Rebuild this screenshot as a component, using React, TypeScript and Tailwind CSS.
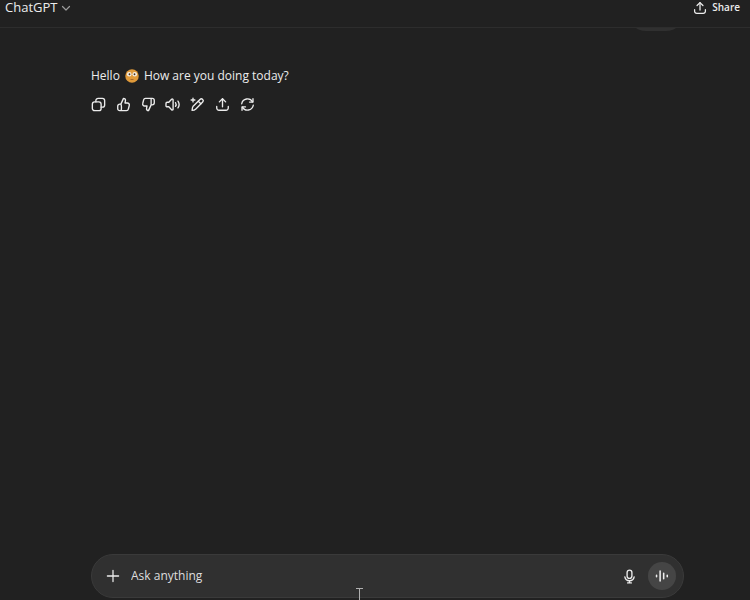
import React from "react"

interface IconProps {
    className?: string;
    children: React.ReactNode;
}

function Icon({ className = "size-[15px]", children }: IconProps) {
    return (
        <svg viewBox="0 0 20 20" fill="none" stroke="currentColor" strokeWidth="1.8" strokeLinecap="round" strokeLinejoin="round" className={className} aria-hidden="true">
            {children}
        </svg>
    )
}

const SharePaths = () => (
    <>
        <path d="M10 13V2.500" />
        <path d="M5.800 6.500L10 2.300l4.200 4.200" />
        <path d="M2.300 12.500v2.200a3 3 0 0 0 3 3h9.400a3 3 0 0 0 3-3v-2.200" />
    </>
)

const actions = [
    {
        label: "Copy",
        icon: (
            <>
                <rect x="1.800" y="6.500" width="11.700" height="11.700" rx="3" />
                <path d="M6.500 6.500V4.800a3 3 0 0 1 3-3h5.700a3 3 0 0 1 3 3v5.700a3 3 0 0 1-3 3h-1.700" />
            </>
        )
    },
    {
        label: "Good response",
        icon: <path d="M6.500 9.500L10 1.800c1.800 0 2.900 1.400 2.600 3.100L12 8h3.200a2.600 2.600 0 0 1 2.500 3.300l-1.200 4.700a2.700 2.700 0 0 1-2.600 2.200H5a2.700 2.700 0 0 1-2.700-2.700v-3.300A2.700 2.700 0 0 1 5 9.500h1.500c1 1.500 1 6.500.3 8.500" />
    },
    {
        label: "Bad response",
        icon: <path d="M13.500 10.500L10 18.200c-1.800 0-2.900-1.400-2.600-3.100L8 12H4.800a2.600 2.600 0 0 1-2.500-3.300L3.500 4a2.700 2.700 0 0 1 2.600-2.200H15a2.700 2.700 0 0 1 2.700 2.700v3.300a2.700 2.700 0 0 1-2.700 2.700h-1.500V2" />
    },
    {
        label: "Read aloud",
        icon: (
            <>
                <path d="M1.300 8.500A1.500 1.500 0 0 1 2.800 7h2.300l3.700-4c.8-.8 2-.3 2 .8v12.400c0 1.100-1.200 1.600-2 .8l-3.700-4H2.800a1.500 1.500 0 0 1-1.500-1.500z" />
                <path d="M14 7.500a4.500 4.500 0 0 1 0 5" />
                <path d="M17.300 5.500a8 8 0 0 1 0 9" />
            </>
        )
    },
    {
        label: "Edit in canvas",
        icon: (
            <>
                <path d="M4.200 12.300L13.300 3.200a2.500 2.500 0 0 1 3.600 3.600L7.800 15.900c-1.200 1.200-2.800 1.900-5 2 .1-2.200.6-4.400 1.400-5.600z" />
                <path d="M11 5.600l3.500 3.500" />
                <path d="M4 1.500v5M1.500 4h5" />
            </>
        )
    },
    { label: "Share response", icon: <SharePaths /> },
    {
        label: "Try again",
        icon: (
            <>
                <path d="M17.300 2.200v4.600h-4.600" />
                <path d="M2.300 9a7.800 7.800 0 0 1 14.500-2.500" />
                <path d="M2.700 17.800v-4.600h4.600" />
                <path d="M17.700 11a7.800 7.800 0 0 1-14.500 2.500" />
            </>
        )
    }
];

function FlushedFace() {
    return (
        <svg viewBox="0 0 28 28" className="size-[14px] shrink-0" role="img" aria-label="Flushed face">
            <circle cx="14" cy="14" r="13.500" fill="#e09a3a" />
            <circle cx="8.500" cy="10.500" r="4.600" fill="#f5efe4" />
            <circle cx="19.500" cy="10.500" r="4.600" fill="#f5efe4" />
            <circle cx="9" cy="10.500" r="1.800" fill="#4a3420" />
            <circle cx="19" cy="10.500" r="1.800" fill="#4a3420" />
            <path d="M11 21h6" stroke="#a8692a" strokeWidth="2" />
        </svg>
    )
}

export default function App() {
    return (
        <div className="relative flex h-screen flex-col overflow-hidden bg-[#212121] font-['Open_Sans','Noto_Sans',sans-serif] text-[#ececec]">
            <header className="flex h-7 shrink-0 items-center justify-between border-b border-[#2d2d2d] pr-[10px] pb-3 pl-[5px]">
                <button className="flex items-center gap-1 text-[13px] leading-[15px]">
                    ChatGPT
                    <Icon className="size-[10px] text-[#9b9b9b]">
                        <path d="M3 7l7 7 7-7" strokeWidth="2.4" />
                    </Icon>
                </button>
                <button className="flex items-center gap-[5px] text-[10px] leading-[15px] font-semibold">
                    <Icon className="size-[14px]"><SharePaths /></Icon>
                    Share
                </button>
            </header>
            <main className="flex-1 pr-[66px] pl-[91px]">
                <div className="flex h-[3px] items-end justify-end overflow-hidden">
                    <div className="h-9 w-14 shrink-0 rounded-[18px] bg-[#303030]" />
                </div>
                <p className="mt-[35px] flex items-center gap-[5px] text-xs leading-5 font-medium">
                    <span>Hello</span>
                    <FlushedFace />
                    <span>How are you doing today?</span>
                </p>
                <div className="mt-[11px] flex w-41 justify-between">
                    {actions.map((action) => (
                        <button key={action.label} aria-label={action.label}>
                            <Icon>{action.icon}</Icon>
                        </button>
                    ))}
                </div>
            </main>
            <form className="mr-[66px] mb-[2px] ml-[91px] flex h-11 shrink-0 items-center rounded-full border border-[#3a3a3a] bg-[#303030] pr-[7px] pl-[14px]" onSubmit={(e) => e.preventDefault()}>
                <button type="button" aria-label="Add files">
                    <Icon className="size-[14px]">
                        <path d="M10 2v16M2 10h16" />
                    </Icon>
                </button>
                <input type="text" aria-label="Message" placeholder="Ask anything" className="ml-[11px] min-w-0 flex-1 bg-transparent text-xs leading-5 font-medium outline-none placeholder:text-[#dedede]" />
                <button type="button" aria-label="Dictate" className="mr-[11px]">
                    <Icon>
                        <rect x="6.800" y="1.500" width="6.400" height="11" rx="3.200" />
                        <path d="M3.800 10.500a6.300 6.300 0 0 0 12.400 0M10 15.500v3M7.500 18.500h5" />
                    </Icon>
                </button>
                <button type="button" aria-label="Use voice mode" className="flex size-7 items-center justify-center rounded-full bg-[#454545]">
                    <Icon className="size-[14px]">
                        <path d="M2.200 9v2M7.300 3v14M12.400 6v8M17.500 9v2" strokeWidth="2.2" />
                    </Icon>
                </button>
            </form>
            <svg viewBox="0 0 7 12" className="absolute bottom-0 left-[356px] h-3 w-[7px]" stroke="#b0b0b0" aria-hidden="true">
                <path d="M0 .5h7M3.500 0v12" />
            </svg>
        </div>
    )
}
